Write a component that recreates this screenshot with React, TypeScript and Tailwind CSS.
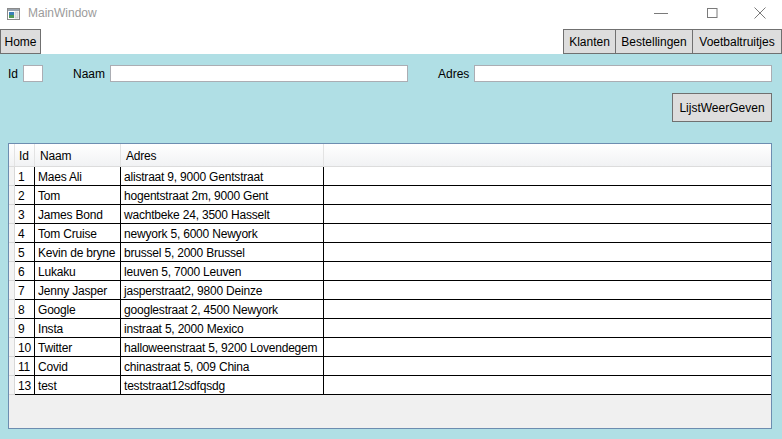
import React from "react";

const rows: [string, string, string][] = [
  ["1", "Maes Ali", "alistraat 9, 9000 Gentstraat"],
  ["2", "Tom", "hogentstraat 2m, 9000 Gent"],
  ["3", "James Bond", "wachtbeke 24, 3500 Hasselt"],
  ["4", "Tom Cruise", "newyork 5, 6000 Newyork"],
  ["5", "Kevin de bryne", "brussel 5, 2000 Brussel"],
  ["6", "Lukaku", "leuven 5, 7000 Leuven"],
  ["7", "Jenny Jasper", "jasperstraat2, 9800 Deinze"],
  ["8", "Google", "googlestraat 2, 4500 Newyork"],
  ["9", "Insta", "instraat 5, 2000 Mexico"],
  ["10", "Twitter", "halloweenstraat 5, 9200 Lovendegem"],
  ["11", "Covid", "chinastraat 5, 009 China"],
  ["13", "test", "teststraat12sdfqsdg"],
];

function AppIcon() {
  return (
    <svg width="13" height="12" viewBox="0 0 13 12">
      <rect x="0.5" y="0.5" width="12" height="11" fill="#fff" stroke="#8a8a8a" />
      <rect x="1" y="1" width="11" height="2" fill="#9aa3ad" />
      <rect x="2" y="4" width="5" height="6" fill="#3a7fb8" />
      <rect x="2" y="7" width="5" height="3" fill="#4f9a57" />
      <rect x="8" y="4" width="3" height="6" fill="#e8e8e8" stroke="#b0b0b0" strokeWidth="0.5" />
    </svg>
  );
}

export default function App() {
  const font = { fontFamily: '"Liberation Sans", Arial, sans-serif' };
  return (
    <div className="w-[782px] h-[439px] flex flex-col bg-white overflow-hidden text-[12px] text-black" style={font}>
      {/* Title bar */}
      <div className="h-[29px] flex items-center relative shrink-0">
        <div className="ml-[7px] mt-[-2px]"><AppIcon /></div>
        <span className="ml-[8px] mt-[-3px] text-[12px] text-[#9b9b9b]">MainWindow</span>
        <div className="ml-auto flex items-center h-full">
          <svg width="16" height="16" viewBox="0 0 16 16" className="mr-[37px] mt-[-4px]">
            <line x1="1" y1="8.5" x2="15" y2="8.5" stroke="#7a7a7a" strokeWidth="1" />
          </svg>
          <svg width="12" height="12" viewBox="0 0 12 12" className="mr-[36px] mt-[-4px]">
            <rect x="1.5" y="1.5" width="9.5" height="9" fill="none" stroke="#7a7a7a" strokeWidth="1" />
          </svg>
          <svg width="12" height="12" viewBox="0 0 12 12" className="mr-[16px] mt-[-4px]">
            <line x1="0.5" y1="0.5" x2="11.5" y2="11.5" stroke="#7a7a7a" strokeWidth="1" />
            <line x1="11.5" y1="0.5" x2="0.5" y2="11.5" stroke="#7a7a7a" strokeWidth="1" />
          </svg>
        </div>
      </div>
      {/* Tab bar */}
      <div className="h-[25px] flex items-stretch shrink-0">
        <button className="w-[41px] h-[25px] bg-[#dddddd] border border-[#707070] text-[12px] leading-none pt-[1px]">Home</button>
        <div className="ml-auto flex">
          <button className="w-[53px] h-[25px] bg-[#dddddd] border border-[#707070] text-[12px] leading-none pt-[1px]">Klanten</button>
          <button className="w-[77px] h-[25px] bg-[#dddddd] border border-[#707070] border-l-0 text-[12px] leading-none pt-[1px]">Bestellingen</button>
          <button className="w-[89px] h-[25px] bg-[#dddddd] border border-[#707070] border-l-0 text-[12px] leading-none pt-[1px]">Voetbaltruitjes</button>
        </div>
      </div>
      {/* Content */}
      <div className="flex-1 bg-[#b0dfe5] pl-[8px] pr-[10px] pt-[11px] flex flex-col">
        <div className="flex items-center h-[17px]">
          <span className="w-[15px]">Id</span>
          <div className="w-[20px] h-[17px] bg-white border border-[#abadb3]" />
          <span className="ml-[30px] w-[37px]">Naam</span>
          <div className="w-[298px] h-[17px] bg-white border border-[#abadb3]" />
          <span className="ml-[30px] w-[36px]">Adres</span>
          <div className="w-[298px] h-[17px] bg-white border border-[#abadb3]" />
        </div>
        <div className="flex justify-end mt-[11px]">
          <button className="w-[100px] h-[29px] bg-[#dddddd] border border-[#707070] text-[12px] leading-none">LijstWeerGeven</button>
        </div>
        <div className="mt-[21px] h-[286px] border border-[#6d8db0] bg-[#f0f0f0] flex flex-col tracking-[-0.2px]">
          {/* header */}
          <div className="h-[23px] flex shrink-0 bg-gradient-to-b from-white to-[#f1f2f4] border-b border-[#dcdcdc]">
            <div className="w-[6px] border-r border-[#e3e3e3]" />
            <div className="w-[20px] border-r border-[#e3e3e3] pl-[4px] pt-[2px] flex items-center">Id</div>
            <div className="w-[86px] border-r border-[#e3e3e3] pl-[5px] pt-[2px] flex items-center">Naam</div>
            <div className="w-[203px] border-r border-[#e3e3e3] pl-[5px] pt-[2px] flex items-center">Adres</div>
            <div className="flex-1" />
          </div>
          {rows.map((r) => (
            <div key={r[0]} className="h-[19px] flex shrink-0 bg-white">
              <div className="w-[6px] bg-[#f4f4f4] border-b border-r border-[#d8d8d8]" />
              <div className="w-[20px] border-r border-b border-black pl-[3px] pt-[1px] flex items-center">{r[0]}</div>
              <div className="w-[86px] border-r border-b border-black pl-[3px] pt-[1px] flex items-center whitespace-nowrap overflow-hidden">{r[1]}</div>
              <div className="w-[203px] border-r border-b border-black pl-[3px] pt-[1px] flex items-center whitespace-nowrap overflow-hidden">{r[2]}</div>
              <div className="flex-1 border-b border-black" />
            </div>
          ))}
        </div>
      </div>
    </div>
  );
}
